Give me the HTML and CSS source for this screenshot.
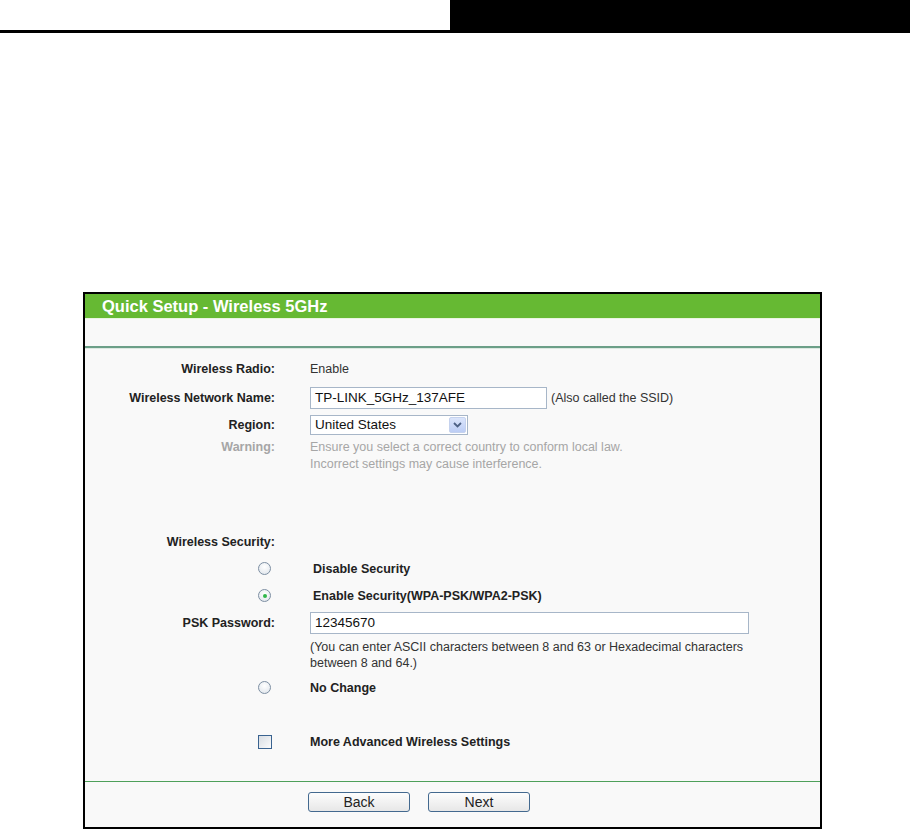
FILE: index.html
```html
<!DOCTYPE html>
<html lang="en">
	<head>
		<meta charset="UTF-8">
		<title>Quick Setup - Wireless 5GHz</title>
		<link rel="stylesheet" href="styles.css">
	</head>
	<body>
		<div class="page-top">
			<div class="page-top-left"></div>
			<div class="page-top-right"></div>
		</div>
		<div class="panel">
			<div class="panel-title">Quick Setup - Wireless 5GHz</div>
			<div class="panel-gap"></div>
			<div class="panel-body">
				<div class="form-row row-radio">
					<div class="form-label">Wireless Radio:</div>
					<div class="form-value">Enable</div>
				</div>
				<div class="form-row row-name">
					<div class="form-label">Wireless Network Name:</div>
					<div class="form-value">
						<div class="text-box ssid-box">TP-LINK_5GHz_137AFE</div>
						<span class="hint">(Also called the SSID)</span>
					</div>
				</div>
				<div class="form-row row-region">
					<div class="form-label">Region:</div>
					<div class="form-value">
						<div class="select-box">
							<span class="select-text">United States</span>
							<span class="select-button">
								<svg width="9" height="6" viewBox="0 0 9 6"><path d="M1 1 L4.5 4.5 L8 1" fill="none" stroke="#4d6185" stroke-width="1.8"/></svg>
							</span>
						</div>
					</div>
				</div>
				<div class="form-row row-warning">
					<div class="form-label warning-label">Warning:</div>
					<div class="form-value warning-text">
						Ensure you select a correct country to conform local law.<br>
						Incorrect settings may cause interference.
					</div>
				</div>
				<div class="form-row row-line row-security">
					<div class="form-label">Wireless Security:</div>
					<div class="form-value"></div>
				</div>
				<div class="form-row row-line">
					<div class="form-label"><span class="radio"></span></div>
					<div class="form-value option option-shift">Disable Security</div>
				</div>
				<div class="form-row row-line">
					<div class="form-label"><span class="radio radio-on"></span></div>
					<div class="form-value option option-shift">Enable Security(WPA-PSK/WPA2-PSK)</div>
				</div>
				<div class="form-row row-line">
					<div class="form-label">PSK Password:</div>
					<div class="form-value">
						<div class="text-box psk-box">12345670</div>
					</div>
				</div>
				<div class="form-row row-note">
					<div class="form-label"></div>
					<div class="form-value note-text">(You can enter ASCII characters between 8 and 63 or Hexadecimal characters between 8 and 64.)</div>
				</div>
				<div class="form-row row-line row-nochange">
					<div class="form-label"><span class="radio"></span></div>
					<div class="form-value option">No Change</div>
				</div>
				<div class="form-row row-line row-advanced">
					<div class="form-label"><span class="check"></span></div>
					<div class="form-value option">More Advanced Wireless Settings</div>
				</div>
			</div>
			<div class="panel-foot">
				<button class="btn">Back</button>
				<button class="btn">Next</button>
			</div>
		</div>
	</body>
</html>
```

FILE: styles.css
```css
*, *::before, *::after {
	box-sizing: border-box;
}

html, body {
	margin: 0;
	padding: 0;
}

body {
	background: #fff;
	color: #222;
	font-family: "Liberation Sans", Arial, sans-serif;
	font-size: 12.5px;
}

.page-top {
	display: flex;
	height: 33px;
}

.page-top-left {
	width: 450px;
	border-bottom: 3px solid #000;
}

.page-top-right {
	flex-grow: 1;
	background: #000;
}

.panel {
	width: 739px;
	margin: 259px 0 0 83px;
	border: 2px solid #000;
	background: #f9f9f9;
}

.panel-title {
	height: 25px;
	background: #66b933;
	color: #fff;
	font-weight: bold;
	font-size: 16.5px;
	line-height: 25px;
	padding-left: 17px;
	border-bottom: 1px solid #e9f5e0;
}

.panel-gap {
	height: 29px;
	border-bottom: 2px solid #6c9f88;
	box-shadow: 0 1px 0 #dde9e2;
}

.panel-body {
	padding: 10px 0 26px 0;
}

.form-row {
	display: flex;
	align-items: center;
}

.form-label {
	width: 190px;
	flex-shrink: 0;
	text-align: right;
	font-weight: bold;
	color: #222;
	display: flex;
	justify-content: flex-end;
	align-items: center;
}

.form-value {
	margin-left: 35px;
	display: flex;
	align-items: center;
	color: #333;
}

.row-radio {
	height: 22px;
}

.row-name {
	height: 35px;
}

.row-region {
	height: 20px;
}

.row-warning {
	margin-top: 4px;
	align-items: flex-start;
	line-height: 17px;
}

.warning-label {
	color: #a6a6a6;
}

.warning-text {
	display: block;
	color: #a6a6a6;
}

.row-line {
	height: 27px;
}

.row-security {
	margin-top: 55px;
}

.row-note {
	margin-top: 3px;
	align-items: flex-start;
	line-height: 16px;
}

.note-text {
	display: block;
	max-width: 452px;
	color: #333;
}

.row-nochange {
	margin-top: 3px;
}

.row-advanced {
	margin-top: 27px;
}

.text-box {
	height: 22px;
	border: 1px solid #a7b6c8;
	background: #fff;
	color: #111;
	font-size: 13.5px;
	line-height: 20px;
	padding-left: 4px;
}

.ssid-box {
	width: 237px;
}

.psk-box {
	width: 439px;
}

.hint {
	margin-left: 4px;
	color: #333;
}

.select-box {
	display: flex;
	width: 158px;
	height: 20px;
	border: 1px solid #a7b6c8;
	background: #fff;
	color: #111;
	font-size: 13.5px;
}

.select-text {
	flex-grow: 1;
	line-height: 18px;
	padding-left: 4px;
}

.select-button {
	width: 17px;
	margin: 1px;
	display: flex;
	align-items: center;
	justify-content: center;
	background: linear-gradient(#dbe5fb, #bccdf5);
	border: 1px solid #c5d2ee;
	border-radius: 2px;
}

.option {
	font-weight: bold;
	color: #222;
}

.option-shift {
	padding-left: 3px;
}

.radio {
	display: block;
	width: 13px;
	height: 13px;
	margin-right: 4px;
	border: 1px solid #7d8fa3;
	border-radius: 50%;
	background: radial-gradient(circle at 50% 35%, #fff, #dde3ea);
	position: relative;
}

.radio-on::after {
	content: "";
	position: absolute;
	left: 3.5px;
	top: 3.5px;
	width: 4px;
	height: 4px;
	border-radius: 50%;
	background: #2fb64a;
}

.check {
	display: block;
	width: 14px;
	height: 14px;
	margin-right: 3px;
	border: 1px solid #3a6390;
	background: linear-gradient(135deg, #d8dde3, #fbfbfb);
}

.panel-foot {
	border-top: 1px solid #4ea05a;
	padding: 10px 0 15px 223px;
	display: flex;
	gap: 18px;
}

.btn {
	width: 102px;
	height: 20px;
	border: 1px solid #43698f;
	border-radius: 3px;
	background: linear-gradient(#fdfdfd, #e7e7e7);
	color: #222;
	font-family: "Liberation Sans", Arial, sans-serif;
	font-size: 14px;
	padding: 0;
	line-height: 18px;
}
```
